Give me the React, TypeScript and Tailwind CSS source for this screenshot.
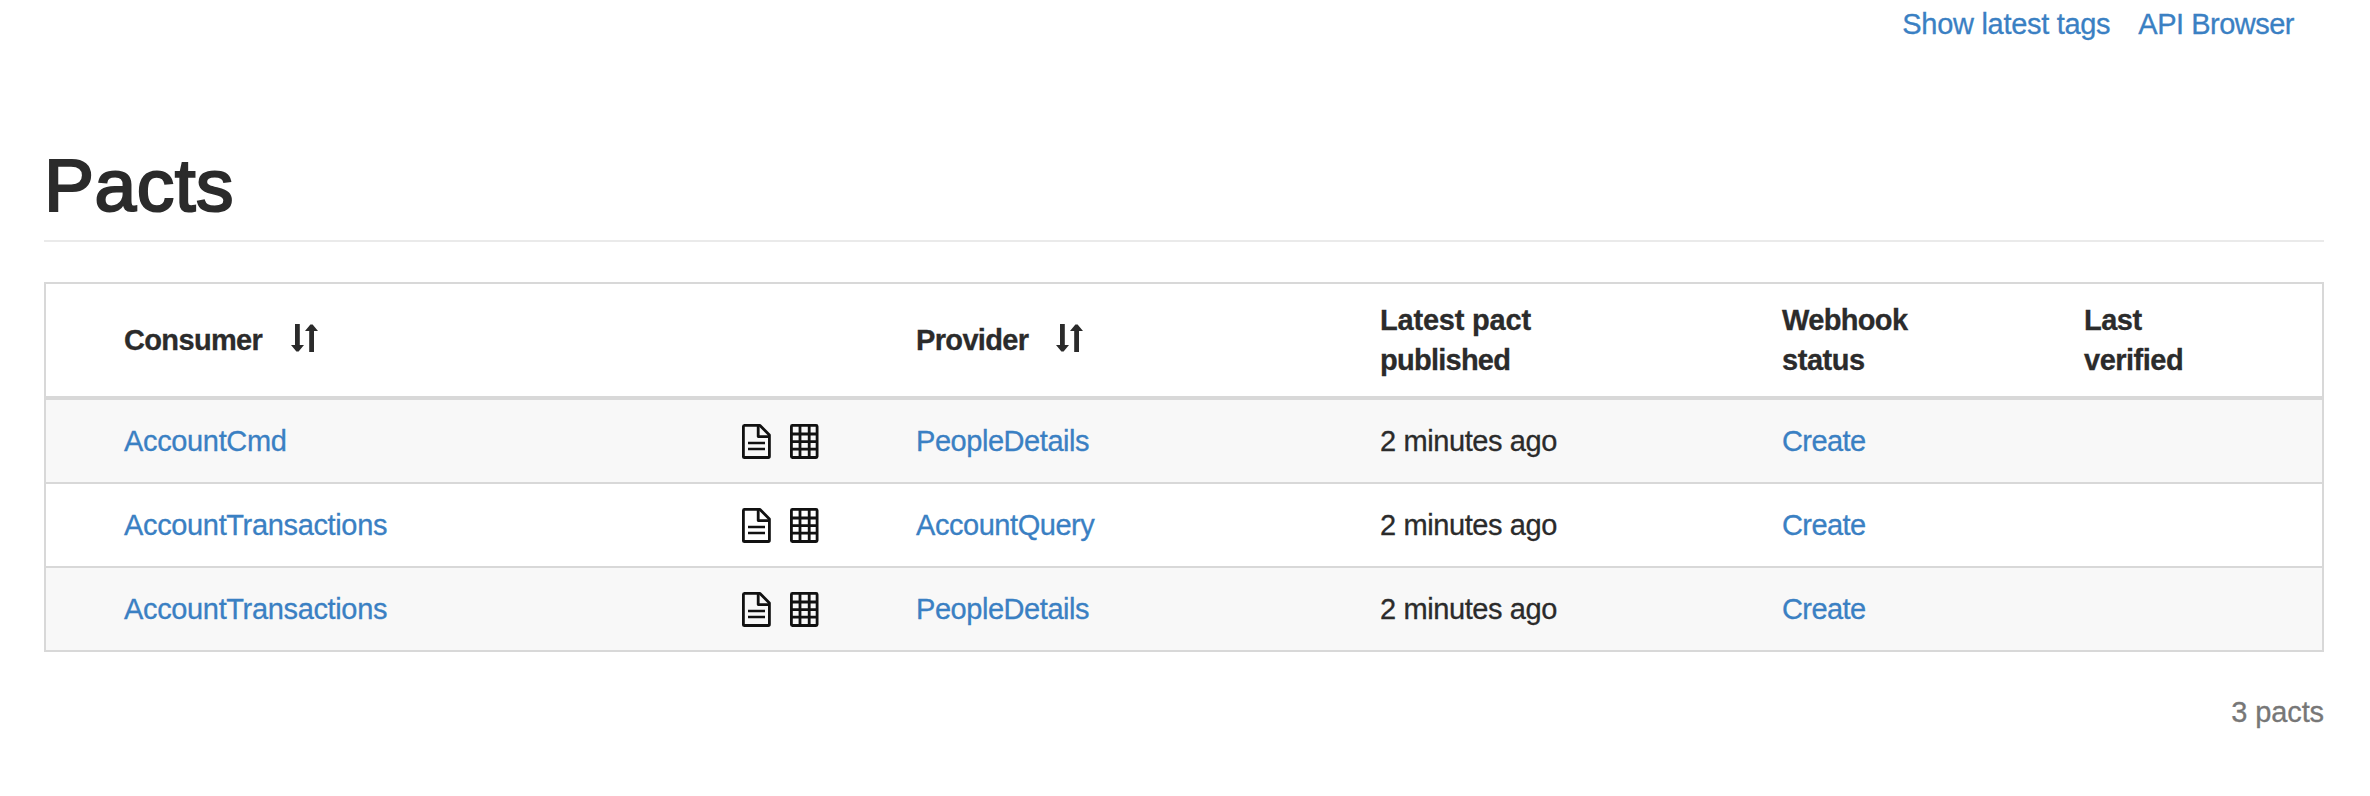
import React from "react";

type Pact = { consumer: string; provider: string; published: string; webhook: string };

const pacts: Pact[] = [
  { consumer: "AccountCmd", provider: "PeopleDetails", published: "2 minutes ago", webhook: "Create" },
  { consumer: "AccountTransactions", provider: "AccountQuery", published: "2 minutes ago", webhook: "Create" },
  { consumer: "AccountTransactions", provider: "PeopleDetails", published: "2 minutes ago", webhook: "Create" },
];

function SortIcon() {
  return (
    <svg className="mb-1 h-7 w-[27px] shrink-0" viewBox="0 0 27 28" fill="currentColor" aria-hidden="true">
      <path d="M4 0H8.8V21H13L7.6 27.4H5.4L0 21H4Z" />
      <path d="M18.2 28H23V7H27L21.6 .6H19.4L14 7H18.2Z" />
    </svg>
  );
}

function DocumentIcon() {
  return (
    <svg className="h-[35px] w-[29px]" viewBox="0 0 29 35" fill="none" stroke="#111111" strokeWidth="2.8" strokeLinejoin="round" aria-hidden="true">
      <path d="M2.4 1.4H18L27.4 11V32.3Q27.4 33.5 26.3 33.5H2.5Q1.4 33.5 1.4 32.4V2.5Q1.4 1.4 2.4 1.4Z" />
      <path d="M16.2 1.6V12.6H27.4" />
      <path d="M6 19H23M6 25H23" strokeWidth="2.6" />
    </svg>
  );
}

function GridIcon() {
  return (
    <svg className="h-[35px] w-[29px]" viewBox="0 0 29 35" fill="none" stroke="#111111" strokeWidth="2.8" aria-hidden="true">
      <rect x="1.4" y="1.4" width="25.7" height="32.1" rx="1" />
      <path d="M10 1V34M19.2 1V34M1 10H27M1 17.6H27M1 25.2H27" />
    </svg>
  );
}

function Link({ children }: { children: React.ReactNode }) {
  return (
    <a href="#" className="text-[#3a80c3]">
      {children}
    </a>
  );
}

export default function App() {
  return (
    <div className="h-[796px] bg-white pr-[46px] pl-11 font-['Liberation_Sans',Arial,sans-serif] text-[29px] leading-10 tracking-[-0.4px] text-[#2b2b2b] [-webkit-text-stroke:0.3px_currentColor]">
      <nav className="flex h-11 justify-end gap-7 pt-1 pr-[30px]">
        <Link>
          <span className="tracking-[-0.3px]">Show latest tags</span>
        </Link>
        <Link>
          <span className="tracking-[-0.5px]">API Browser</span>
        </Link>
      </nav>
      <h1 className="flex h-[198px] items-end border-b-2 border-[#eaeaea] pb-[15px] text-[75px] leading-[79px] font-normal tracking-[0.5px] [-webkit-text-stroke:2.2px_#2b2b2b]">
        Pacts
      </h1>
      <table className="mt-10 w-full table-fixed border-separate border-spacing-0 border-2 border-[#d8d8d8] text-left">
        <colgroup>
          <col className="w-[62px]" />
          <col className="w-[618px]" />
          <col className="w-[174px]" />
          <col className="w-[464px]" />
          <col className="w-[402px]" />
          <col className="w-[302px]" />
          <col className="w-[254px]" />
        </colgroup>
        <thead>
          <tr className="h-[116px] tracking-[-0.65px] [&>th]:border-b-4 [&>th]:border-[#d8d8d8] [&>th]:py-0 [&>th]:pl-4 [&>th]:font-bold">
            <th />
            <th>
              <span className="flex items-center gap-[29px]">
                Consumer
                <SortIcon />
              </span>
            </th>
            <th />
            <th>
              <span className="flex items-center gap-7">
                Provider
                <SortIcon />
              </span>
            </th>
            <th className="tracking-[-0.2px]">
              Latest pact
              <br />
              <span className="tracking-[-0.75px]">published</span>
            </th>
            <th>
              Webhook
              <br />
              <span className="tracking-[-0.45px]">status</span>
            </th>
            <th className="tracking-[-0.5px]">
              Last
              <br />
              verified
            </th>
          </tr>
        </thead>
        <tbody>
          {pacts.map((pact, i) => (
            <tr
              key={i}
              className="h-[84px] odd:bg-[#f8f8f8] last:h-[82px] [&>td]:border-b-2 [&>td]:border-[#d8d8d8] [&>td]:py-0 [&>td]:pl-4 last:[&>td]:border-b-0"
            >
              <td />
              <td className="tracking-[-0.35px]">
                <Link>{pact.consumer}</Link>
              </td>
              <td>
                <span className="flex gap-[19px]">
                  <DocumentIcon />
                  <GridIcon />
                </span>
              </td>
              <td className="tracking-[-0.45px]">
                <Link>{pact.provider}</Link>
              </td>
              <td>{pact.published}</td>
              <td className="tracking-[-0.6px]">
                <Link>{pact.webhook}</Link>
              </td>
              <td />
            </tr>
          ))}
        </tbody>
      </table>
      <p className="mt-10 text-right tracking-[-0.1px] text-[#777777]">3 pacts</p>
    </div>
  );
}
